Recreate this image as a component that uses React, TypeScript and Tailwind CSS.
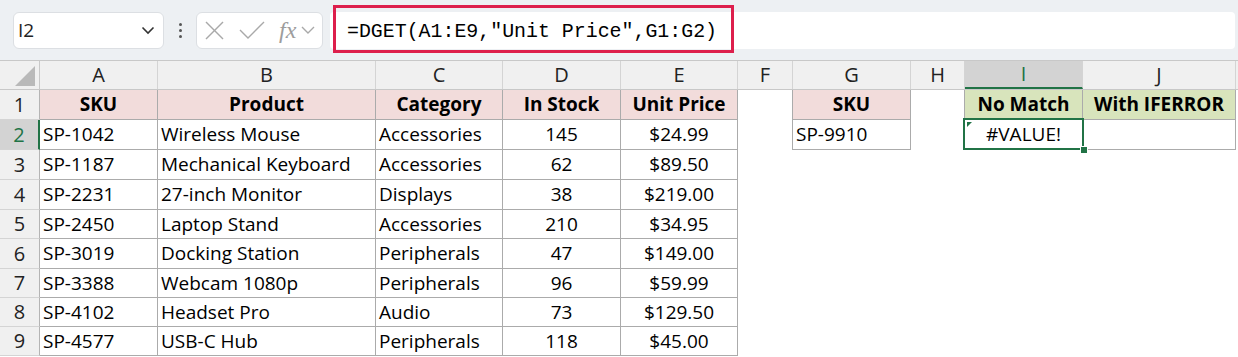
import React from 'react';

const colW = ['w-[118px]', 'w-[218px]', 'w-[127px]', 'w-[118px]', 'w-[117px]', 'w-[55px]', 'w-[118px]', 'w-[54px]', 'w-[118px]', 'w-[153px]'];
const letters = ['A', 'B', 'C', 'D', 'E', 'F', 'G', 'H', 'I', 'J'];
const rowH = ['h-[30px]', 'h-[30px]', 'h-[30px]', 'h-[30px]', 'h-[29px]', 'h-[30px]', 'h-[29px]', 'h-[29px]', 'h-[29px]'];

const products = [
  ['SP-1042', 'Wireless Mouse', 'Accessories', '145', '$24.99'],
  ['SP-1187', 'Mechanical Keyboard', 'Accessories', '62', '$89.50'],
  ['SP-2231', '27-inch Monitor', 'Displays', '38', '$219.00'],
  ['SP-2450', 'Laptop Stand', 'Accessories', '210', '$34.95'],
  ['SP-3019', 'Docking Station', 'Peripherals', '47', '$149.00'],
  ['SP-3388', 'Webcam 1080p', 'Peripherals', '96', '$59.99'],
  ['SP-4102', 'Headset Pro', 'Audio', '73', '$129.50'],
  ['SP-4577', 'USB-C Hub', 'Peripherals', '118', '$45.00'],
];

type Cell = { text?: string; bold?: boolean; align?: 'left' | 'center'; bg?: string; border?: boolean; rightOnly?: boolean };

function buildRow(r: number): Cell[] {
  const cells: Cell[] = Array.from({ length: 10 }, () => ({}));
  if (r === 0) {
    ['SKU', 'Product', 'Category', 'In Stock', 'Unit Price'].forEach((t, i) => {
      cells[i] = { text: t, bold: true, align: 'center', bg: 'bg-[#f2dcdb]', border: true };
    });
    cells[5] = { rightOnly: true };
    cells[6] = { text: 'SKU', bold: true, align: 'center', bg: 'bg-[#f2dcdb]', border: true };
    cells[7] = { rightOnly: true };
    cells[8] = { text: 'No Match', bold: true, align: 'center', bg: 'bg-[#d8e4bc]', border: true };
    cells[9] = { text: 'With IFERROR', bold: true, align: 'center', bg: 'bg-[#d8e4bc]', border: true };
  } else {
    const p = products[r - 1];
    p.forEach((t, i) => {
      cells[i] = { text: t, align: i >= 3 ? 'center' : 'left', border: true };
    });
    if (r === 1) {
      cells[5] = { rightOnly: true };
      cells[6] = { text: 'SP-9910', align: 'left', border: true };
      cells[7] = { rightOnly: true };
      cells[8] = { text: '#VALUE!', align: 'center', border: true };
      cells[9] = { border: true };
    }
  }
  return cells;
}

function TopBar() {
  return (
    <div className="relative h-[60px] bg-[#edf0f3] flex items-center">
      <div className="ml-[13px] w-[151px] h-[37px] bg-white rounded-[6px] border border-[#dcdfe3] flex items-center justify-between pl-[4px] pr-[8px]">
        <span className="text-[19px] text-[#222]">I2</span>
        <svg width="14" height="9" viewBox="0 0 14 9">
          <polyline points="1.5,1.5 7,7 12.5,1.5" fill="none" stroke="#333" strokeWidth="1.6" />
        </svg>
      </div>
      <div className="w-[32px] flex flex-col items-center gap-[3px]">
        <div className="w-[3px] h-[3px] rounded-full bg-[#555]" />
        <div className="w-[3px] h-[3px] rounded-full bg-[#555]" />
        <div className="w-[3px] h-[3px] rounded-full bg-[#555]" />
      </div>
      <div className="w-[127px] h-[37px] bg-white rounded-[6px] border border-[#dcdfe3] flex items-center pl-[8px]">
        <svg width="19" height="19" viewBox="0 0 19 19">
          <line x1="1" y1="1" x2="18" y2="18" stroke="#a9a9a9" strokeWidth="1.4" />
          <line x1="18" y1="1" x2="1" y2="18" stroke="#a9a9a9" strokeWidth="1.4" />
        </svg>
        <svg width="26" height="18" viewBox="0 0 26 18" className="ml-[15px]">
          <polyline points="1,9 9,17 25,1" fill="none" stroke="#a9a9a9" strokeWidth="1.4" />
        </svg>
        <span className="ml-[14px] text-[24px] italic text-[#9d9d9d] leading-none" style={{ fontFamily: '"Liberation Serif", serif' }}>fx</span>
        <svg width="14" height="8" viewBox="0 0 14 8" className="ml-[5px]">
          <polyline points="1,1 7,7 13,1" fill="none" stroke="#a9a9a9" strokeWidth="1.4" />
        </svg>
      </div>
      <div className="ml-[7px] mr-[3px] flex-1 h-[37px] bg-white rounded-[4px] flex items-center pl-[17px] pt-[3px]">
        <span className="text-[19.9px] text-black" style={{ fontFamily: '"Liberation Mono", monospace' }}>
          =DGET(A1:E9,"Unit Price",G1:G2)
        </span>
      </div>
      <div className="absolute left-[333px] top-[5px] w-[401px] h-[48px] border-[3px] border-[#dd1f4c]" />
    </div>
  );
}

function HeaderRow() {
  return (
    <div className="flex h-[30px] border-t border-b border-t-[#c8c8c8] border-b-[#c8c8c8] bg-[#f0f0f0]">
      <div className="w-[40px] border-r border-[#c8c8c8] relative overflow-hidden">
        <svg width="30" height="22" viewBox="0 0 30 22" className="absolute right-[3px] bottom-[2px]">
          <polygon points="29,1 29,21 9,21" fill="#b9b9b9" />
        </svg>
      </div>
      {letters.map((l, i) => (
        <div
          key={l}
          className={`${colW[i]} border-r border-[#d4d4d4] flex items-center justify-center text-[20px] ${
            i === 8 ? 'bg-[#d3d3d3] text-[#217346] border-b-2 border-b-[#217346]' : 'text-[#222]'
          }`}
        >
          {l}
        </div>
      ))}
      <div className="flex-1" />
    </div>
  );
}

export default function App() {
  return (
    <div className="w-[1238px] h-[357px] overflow-hidden bg-white" style={{ fontFamily: '"Open Sans", sans-serif' }}>
      <TopBar />
      <HeaderRow />
      {rowH.map((h, r) => {
        const cells = buildRow(r);
        const selRow = r === 1;
        return (
          <div key={r} className={`flex ${h} ${selRow ? 'relative z-10' : ''}`}>
            <div
              className={`w-[40px] flex items-center justify-center text-[20px] border-b border-b-[#d4d4d4] ${
                selRow ? 'bg-[#d3d3d3] text-[#217346] border-r-2 border-r-[#217346]' : 'bg-[#f0f0f0] text-[#222] border-r border-r-[#b4b4b4]'
              }`}
            >
              {r + 1}
            </div>
            {cells.map((c, i) => {
              const borderCls = c.border
                ? 'border-r border-b border-[#ababab]'
                : c.rightOnly
                ? 'border-r border-[#ababab]'
                : '';
              const isSel = r === 1 && i === 8;
              return (
                <div
                  key={i}
                  className={`${colW[i]} ${borderCls} ${c.bg ?? ''} relative flex items-center text-[19px] text-black whitespace-nowrap ${
                    c.align === 'center' ? 'justify-center' : 'pl-[3px]'
                  } ${c.bold ? 'font-bold' : ''} ${isSel ? 'z-10' : ''}`}
                >
                  {c.text}
                  {isSel && (
                    <>
                      <div className="absolute -left-[2px] -top-[2px] -right-[2px] -bottom-[1px] border-2 border-[#217346]" />
                      <svg width="5" height="5" viewBox="0 0 5 5" className="absolute left-[2px] top-[2px]">
                        <polygon points="0,0 5,0 0,5" fill="#217346" />
                      </svg>
                      <div className="absolute -right-[6px] -bottom-[5px] w-[8px] h-[8px] bg-[#217346] border border-white" />
                    </>
                  )}
                </div>
              );
            })}
            <div className="flex-1" />
          </div>
        );
      })}
    </div>
  );
}
